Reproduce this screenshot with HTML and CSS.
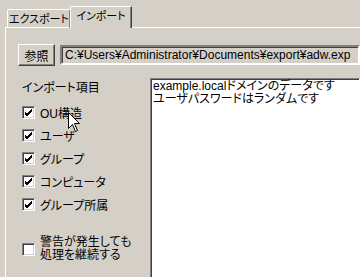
FILE: index.html
```html
<!DOCTYPE html>
<html lang="ja">
<head>
    <meta charset="UTF-8">
    <title>インポート</title>
    <link rel="stylesheet" href="styles.css">
</head>
<body>
<div class="window">
    <div class="tabs">
        <div class="tab">エクスポート</div>
        <div class="tab active">インポート</div>
    </div>
    <div class="panel">
        <div class="file-row">
            <button class="btn">参照</button>
            <div class="path">C:¥Users¥Administrator¥Documents¥export¥adw.exp</div>
        </div>
        <div class="body-row">
            <div class="options">
                <p class="group-label">インポート項目</p>
                <label class="opt"><span class="cb"><svg width="9" height="9" viewBox="0 0 9 9"><path d="M1 4 L3 6 L8 1 M1 5 L3 7 L8 2 M1 6 L3 8 L8 3" stroke="#000" fill="none" stroke-width="1"/></svg></span>OU構造</label>
                <label class="opt"><span class="cb"><svg width="9" height="9" viewBox="0 0 9 9"><path d="M1 4 L3 6 L8 1 M1 5 L3 7 L8 2 M1 6 L3 8 L8 3" stroke="#000" fill="none" stroke-width="1"/></svg></span>ユーザ</label>
                <label class="opt"><span class="cb"><svg width="9" height="9" viewBox="0 0 9 9"><path d="M1 4 L3 6 L8 1 M1 5 L3 7 L8 2 M1 6 L3 8 L8 3" stroke="#000" fill="none" stroke-width="1"/></svg></span>グループ</label>
                <label class="opt"><span class="cb"><svg width="9" height="9" viewBox="0 0 9 9"><path d="M1 4 L3 6 L8 1 M1 5 L3 7 L8 2 M1 6 L3 8 L8 3" stroke="#000" fill="none" stroke-width="1"/></svg></span>コンピュータ</label>
                <label class="opt"><span class="cb"><svg width="9" height="9" viewBox="0 0 9 9"><path d="M1 4 L3 6 L8 1 M1 5 L3 7 L8 2 M1 6 L3 8 L8 3" stroke="#000" fill="none" stroke-width="1"/></svg></span>グループ所属</label>
                <label class="opt warn"><span class="cb"></span><span>警告が発生しても<br>処理を継続する</span></label>
            </div>
            <div class="log">example.localドメインのデータです<br>ユーザパスワードはランダムです</div>
        </div>
    </div>
    <svg class="cursor" width="13" height="21" viewBox="0 0 13 21"><path d="M0.5 0.5 L0.5 16.5 L4.5 12.5 L7.5 19.5 L9.5 18.5 L6.5 11.5 L11.5 11.5 Z" fill="#fff" stroke="#000" stroke-width="1"/></svg>
</div>
</body>
</html>
```

FILE: styles.css
```css
*{
    box-sizing: border-box;
}
body{
    margin: 0;
    background-color: #D4D0C8;
    font-family: "Liberation Sans", "Noto Sans CJK JP", sans-serif;
    font-size: 12px;
    color: #000;
    overflow: hidden;
}
.window{
    position: relative;
    width: 360px;
    height: 277px;
    overflow: hidden;
}
.tabs{
    display: flex;
    align-items: flex-end;
    height: 28px;
    padding-left: 7px;
    font-size: 11px;
    white-space: nowrap;
    font-feature-settings: "palt";
}
.tab{
    height: 19px;
    width: 64px;
    padding-top: 2px;
    line-height: 14px;
    text-align: center;
    border-top: 1px solid #fff;
    border-left: 1px solid #fff;
    border-right: 1px solid #404040;
    border-top-left-radius: 2px;
    box-shadow: inset -1px 0 0 #808080;
}
.tab.active{
    position: relative;
    z-index: 1;
    height: 22px;
    width: 62px;
    margin-left: -1px;
    padding-top: 2px;
    background-color: #D4D0C8;
}
.panel{
    margin-top: -1px;
    margin-left: 5px;
    height: 260px;
    border-top: 1px solid #fff;
    border-left: 1px solid #fff;
    padding: 16px 0 0 12px;
}
.file-row{
    display: flex;
    align-items: center;
    gap: 5px;
}
.btn{
    width: 46px;
    height: 22px;
    padding: 0;
    font: inherit;
    font-feature-settings: "palt";
    background-color: #D4D0C8;
    border: 1px solid;
    border-color: #fff #404040 #404040 #fff;
    box-shadow: inset -1px -1px 0 #808080;
}
.path{
    width: 300px;
    flex: none;
    height: 20px;
    line-height: 16px;
    padding-left: 3px;
    white-space: nowrap;
    border: 2px solid;
    border-color: #808080 #fff #fff #808080;
    box-shadow: inset 1px 1px 0 #404040;
}
.body-row{
    display: flex;
    margin-top: 12px;
}
.options{
    width: 132px;
    padding: 3px 0 0 4px;
    display: flex;
    flex-direction: column;
    font-feature-settings: "palt";
}
.group-label{
    margin: 0 0 6px;
    line-height: 14px;
}
.opt{
    display: flex;
    align-items: center;
    gap: 5px;
    height: 23px;
}
.cb{
    width: 13px;
    height: 13px;
    flex: none;
    display: flex;
    align-items: center;
    justify-content: center;
    background-color: #fff;
    border: 1px solid;
    border-color: #808080 #fff #fff #808080;
    box-shadow: inset 1px 1px 0 #404040, inset -1px -1px 0 #D4D0C8;
}
.opt.warn{
    margin-top: 19px;
    height: 28px;
    line-height: 13px;
}
.log{
    flex: 1;
    height: 220px;
    padding: 1px 2px;
    line-height: 13px;
    background-color: #fff;
    white-space: nowrap;
    font-feature-settings: "palt";
    border: 1px solid;
    border-color: #808080 #fff #fff #808080;
    box-shadow: inset 1px 1px 0 #404040;
}
.cursor{
    position: absolute;
    left: 68px;
    top: 112px;
}
```
